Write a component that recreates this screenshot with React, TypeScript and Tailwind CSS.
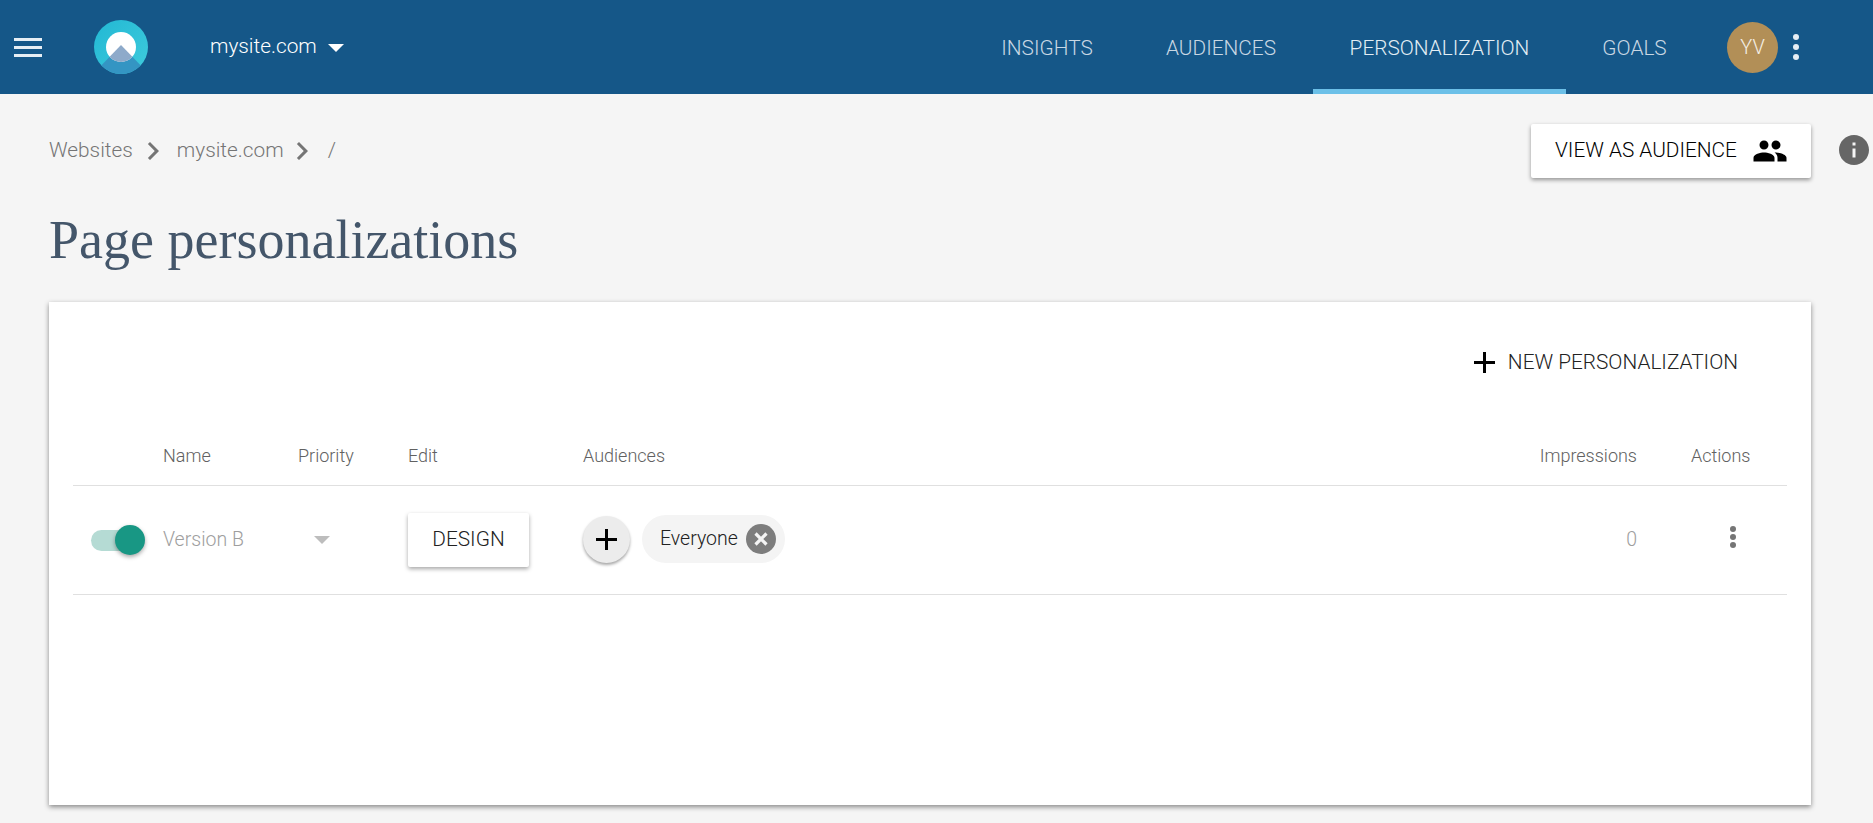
const ROW_GRID = "grid grid-cols-[90px_135px_110px_175px_1fr_150px] items-center border-b border-[#e0e0e0]";

function Logo() {
  return (
    <svg width="54" height="54" viewBox="0 0 54 54" className="shrink-0">
      <defs>
        <clipPath id="outer">
          <circle cx="27" cy="27" r="27" />
        </clipPath>
        <clipPath id="inner">
          <circle cx="27" cy="27" r="15" />
        </clipPath>
        <linearGradient id="ring" x1="0" y1="0" x2="1" y2="1">
          <stop offset="0" stopColor="#22b8d4" />
          <stop offset="1" stopColor="#3fcbdc" />
        </linearGradient>
      </defs>
      <circle cx="27" cy="27" r="27" fill="url(#ring)" />
      <path d="M-2 55L27 25L56 55Z" fill="#3495c3" clipPath="url(#outer)" />
      <circle cx="27" cy="27" r="15" fill="#fff" />
      <path d="M-2 55L27 25L56 55Z" fill="#8eaaca" clipPath="url(#inner)" />
    </svg>
  );
}

function Chevron() {
  return (
    <svg width="12" height="18" viewBox="8 6 8 12" fill="#757575" className="shrink-0">
      <path d="M10 6L8.59 7.41 13.17 12l-4.58 4.59L10 18l6-6z" />
    </svg>
  );
}

function Plus() {
  return (
    <svg width="21" height="21" viewBox="5 5 14 14" fill="#000" className="shrink-0">
      <path d="M19 13h-6v6h-2v-6H5v-2h6V5h2v6h6v2z" />
    </svg>
  );
}

function NavTab({ label, width, active }: { label: string; width: string; active?: boolean }) {
  return (
    <div
      className={`flex h-full items-center justify-center border-b-[5px] pt-[8px] text-[20.8px] font-light ${width} ${
        active ? "border-[#6cc0e8] text-[#e3eef5]" : "border-transparent text-[#c9d8e4]"
      }`}
    >
      {label}
    </div>
  );
}

function Header() {
  return (
    <header className="flex h-[94px] items-center bg-[#155788] pl-[14px] pr-[74px]">
      <div className="flex w-[28px] flex-col gap-[5px]">
        <span className="h-[3px] bg-[#e6eef4]" />
        <span className="h-[3px] bg-[#e6eef4]" />
        <span className="h-[3px] bg-[#e6eef4]" />
      </div>
      <div className="ml-[52px]">
        <Logo />
      </div>
      <div className="ml-[62px] text-[20.8px] font-light text-white">mysite.com</div>
      <div className="ml-[11px] mt-[2px] h-0 w-0 border-x-[8px] border-t-[8px] border-x-transparent border-t-white" />
      <nav className="ml-auto flex h-full items-center">
        <NavTab label="INSIGHTS" width="w-[164px]" />
        <NavTab label="AUDIENCES" width="w-[184px]" />
        <NavTab label="PERSONALIZATION" width="w-[253px]" active />
        <NavTab label="GOALS" width="w-[137px]" />
        <div className="ml-[24px] flex h-[51px] w-[51px] items-center justify-center rounded-full bg-[#b28f57] text-[20px] font-light text-[#f4eee4]">
          YV
        </div>
        <div className="ml-[15px] flex flex-col gap-[4px]">
          <span className="h-[6px] w-[6px] rounded-full bg-[#e6eef4]" />
          <span className="h-[6px] w-[6px] rounded-full bg-[#e6eef4]" />
          <span className="h-[6px] w-[6px] rounded-full bg-[#e6eef4]" />
        </div>
      </nav>
    </header>
  );
}

function TopRow() {
  return (
    <div className="flex items-start pt-[30px]">
      <div className="flex h-[53px] flex-1 items-center text-[20.8px] font-light text-[#757575]">
        <span>Websites</span>
        <span className="ml-[14px]">
          <Chevron />
        </span>
        <span className="ml-[18px]">mysite.com</span>
        <span className="ml-[12px]">
          <Chevron />
        </span>
        <span className="ml-[20px]">/</span>
      </div>
      <button className="flex h-[54px] w-[280px] items-center rounded-[2px] bg-white pl-[24px] text-[20.8px] font-light text-black shadow-[0_2px_4px_rgba(0,0,0,0.4)]">
        VIEW AS AUDIENCE
        <svg width="36" height="36" viewBox="0 0 24 24" fill="#000" className="ml-[15px]">
          <path d="M16 11c1.66 0 2.99-1.34 2.99-3S17.66 5 16 5c-1.66 0-3 1.34-3 3s1.34 3 3 3zm-8 0c1.66 0 2.99-1.34 2.99-3S9.66 5 8 5C6.34 5 5 6.34 5 8s1.34 3 3 3zm0 2c-2.33 0-7 1.17-7 3.5V19h14v-2.5c0-2.33-4.67-3.5-7-3.5zm8 0c-.29 0-.62.02-.97.05 1.16.84 1.97 1.97 1.97 3.45V19h6v-2.5c0-2.33-4.67-3.5-7-3.5z" />
        </svg>
      </button>
      <svg width="36" height="36" viewBox="0 0 24 24" fill="#666" className="ml-[25px] mt-[8px] shrink-0">
        <path d="M12 2C6.48 2 2 6.48 2 12s4.48 10 10 10 10-4.48 10-10S17.52 2 12 2zm1 15h-2v-6h2v6zm0-8h-2V7h2v2z" />
      </svg>
    </div>
  );
}

function HeadRow() {
  return (
    <div className={`${ROW_GRID} h-[65px] pt-[5px] text-[18px] font-light text-[#616161]`}>
      <span className="col-start-2">Name</span>
      <span>Priority</span>
      <span>Edit</span>
      <div className="col-start-5 flex justify-between">
        <span>Audiences</span>
        <span>Impressions</span>
      </div>
      <span className="pl-[54px]">Actions</span>
    </div>
  );
}

function Row() {
  return (
    <div className={`${ROW_GRID} h-[109px]`}>
      <div className="relative ml-[18px] h-[21px] w-[45px] rounded-full bg-[#b5dbd4]">
        <span className="absolute -right-[9px] -top-[5px] h-[30px] w-[30px] rounded-full bg-[#189784] shadow-[0_2px_4px_rgba(0,0,0,0.35)]" />
      </div>
      <span className="text-[19.5px] font-light text-[#9e9e9e]">Version B</span>
      <div className="ml-[16px] h-0 w-0 border-x-[8px] border-t-[8px] border-x-transparent border-t-[#bdbdbd]" />
      <button className="-mt-[1px] flex h-[54px] w-[121px] items-center justify-center rounded-[2px] bg-white text-[20.8px] font-light text-[#212121] shadow-[0_2px_4px_rgba(0,0,0,0.35)]">
        DESIGN
      </button>
      <div className="col-start-5 flex items-center">
        <div className="-mt-[2px] flex h-[47px] w-[47px] items-center justify-center rounded-full bg-[#ececec] shadow-[0_2px_3px_rgba(0,0,0,0.35)]">
          <Plus />
        </div>
        <div className="-mt-[2px] ml-[12px] flex h-[48px] w-[143px] items-center rounded-full bg-[#f4f4f4] pl-[18px] text-[19.5px] font-light text-[#212121]">
          Everyone
          <svg width="30" height="30" viewBox="0 0 30 30" className="ml-[8px]">
            <circle cx="15" cy="15" r="15" fill="#7d7d7d" />
            <path d="M9.5 9.5L20.5 20.5M20.5 9.5L9.5 20.5" stroke="#f4f4f4" strokeWidth="3.2" />
          </svg>
        </div>
        <span className="ml-auto text-[19.5px] font-light text-[#9e9e9e]">0</span>
      </div>
      <div className="-mt-[6px] ml-[93px] flex flex-col gap-[2px]">
        <span className="h-[6px] w-[6px] rounded-full bg-[#757575]" />
        <span className="h-[6px] w-[6px] rounded-full bg-[#757575]" />
        <span className="h-[6px] w-[6px] rounded-full bg-[#757575]" />
      </div>
    </div>
  );
}

function Card() {
  return (
    <section className="mr-[61px] mt-[32px] h-[503px] bg-white px-[24px] shadow-[0_2px_5px_rgba(0,0,0,0.45)]">
      <div className="flex h-[119px] items-start justify-end pr-[49px] pt-[45px] text-[20.8px] font-light text-[#222]">
        <span className="flex items-center">
          <Plus />
          <span className="ml-[13px]">NEW PERSONALIZATION</span>
        </span>
      </div>
      <HeadRow />
      <Row />
    </section>
  );
}

export default function App() {
  return (
    <div className="h-[823px] w-[1873px] overflow-hidden bg-[#f5f5f5] font-['Roboto',sans-serif]">
      <Header />
      <main className="pl-[49px] pr-[1px]">
        <TopRow />
        <h1 className="mt-[32px] text-[54px] font-normal leading-[60px] text-[#44566a] font-['Liberation_Serif',serif]">
          Page personalizations
        </h1>
        <Card />
      </main>
    </div>
  );
}
